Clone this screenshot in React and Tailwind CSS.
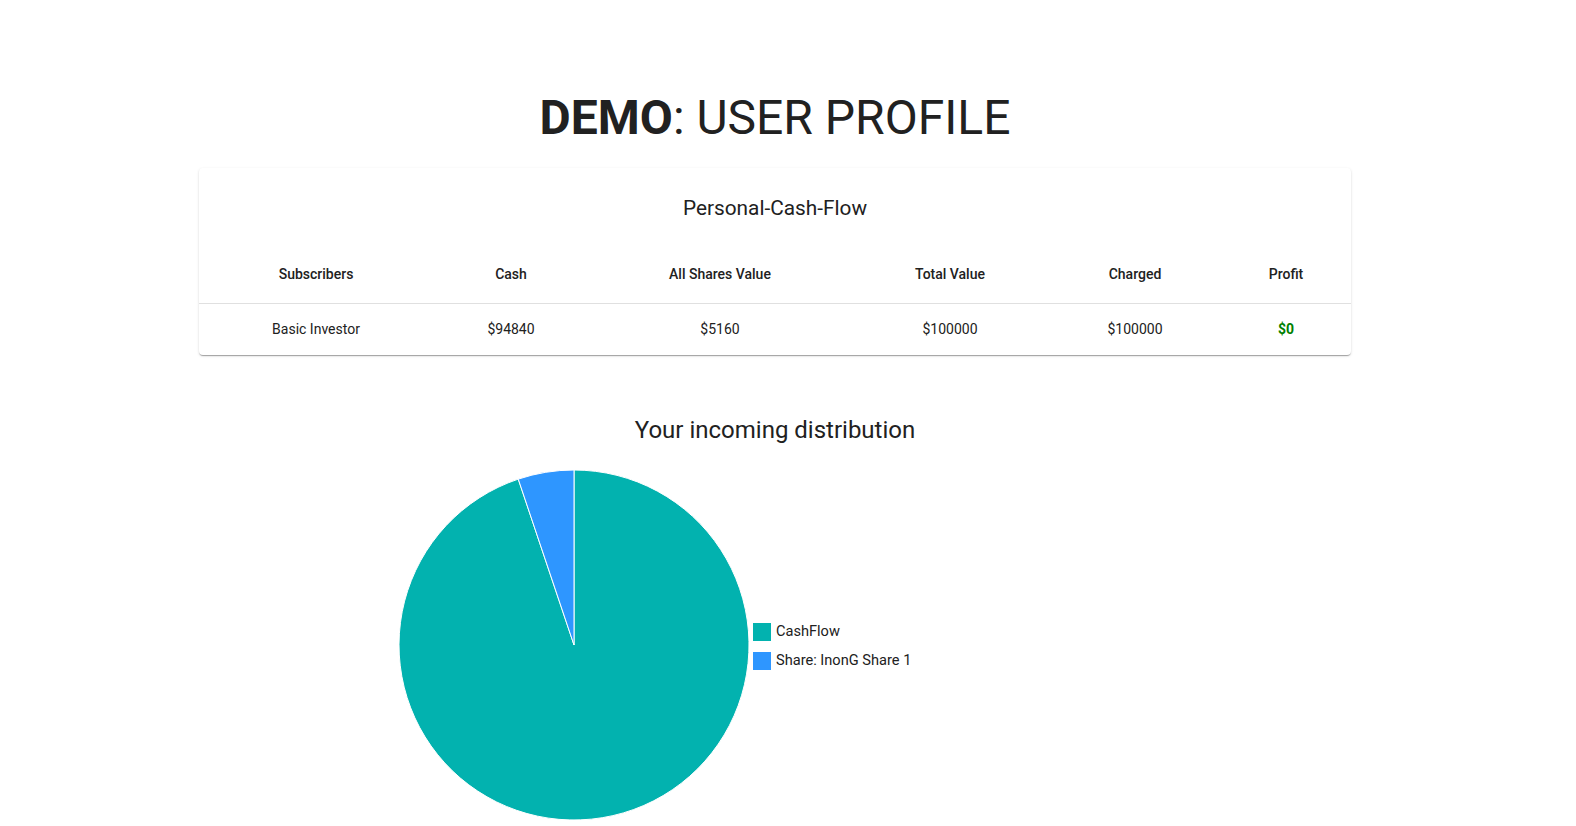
const columns = [
  { label: 'Subscribers', w: 'w-[234px]' },
  { label: 'Cash', w: 'w-[156px]' },
  { label: 'All Shares Value', w: 'w-[262px]' },
  { label: 'Total Value', w: 'w-[198px]' },
  { label: 'Charged', w: 'w-[172px]' },
  { label: 'Profit', w: 'w-[130px]' },
];

const row = ['Basic Investor', '$94840', '$5160', '$100000', '$100000'];

// simple pie slices drawn as svg paths
const slices = [
  { label: 'CashFlow', value: 94840, color: '#02B2AF' },
  { label: 'Share: InonG Share 1', value: 5160, color: '#2E96FF' },
];

function PieChart() {
  const r = 175;
  const cx = 176;
  const cy = 176;
  const total = slices.reduce((s, x) => s + x.value, 0);
  let start = 0;
  const paths = slices.map((s) => {
    const a0 = start;
    const a1 = start + (s.value / total) * Math.PI * 2;
    start = a1;
    const x0 = cx + r * Math.sin(a0);
    const y0 = cy - r * Math.cos(a0);
    const x1 = cx + r * Math.sin(a1);
    const y1 = cy - r * Math.cos(a1);
    const large = a1 - a0 > Math.PI ? 1 : 0;
    return (
      <path
        key={s.label}
        d={`M${cx},${cy} L${x0},${y0} A${r},${r} 0 ${large} 1 ${x1},${y1} Z`}
        fill={s.color}
        stroke="#fff"
        strokeWidth="1"
      />
    );
  });
  return (
    <svg width="352" height="352" viewBox="0 0 352 352">
      {paths}
    </svg>
  );
}

export default function App() {
  return (
    <div className="min-h-screen bg-white text-[#212121]" style={{ fontFamily: 'Roboto, "Liberation Sans", sans-serif' }}>
      <div className="w-[1152px] ml-[199px] pt-[89px]">
        <h1 className="text-center text-[48px] leading-[58px]">
          <span className="font-bold">DEMO</span>: USER PROFILE
        </h1>

        <div className="mt-[21px] bg-white rounded shadow-[0_2px_1px_-1px_rgba(0,0,0,0.2),0_1px_1px_0_rgba(0,0,0,0.14),0_1px_3px_0_rgba(0,0,0,0.12)]">
          <div className="pt-[28px] text-center text-[20.8px] leading-[24px]">Personal-Cash-Flow</div>
          <table className="mt-[26px] w-full table-fixed border-collapse text-[14px]">
            <thead>
              <tr className="border-b border-[#e0e0e0]">
                {columns.map((c) => (
                  <th key={c.label} className={`${c.w} h-[57px] font-medium text-center`}>
                    {c.label}
                  </th>
                ))}
              </tr>
            </thead>
            <tbody>
              <tr>
                {row.map((v, i) => (
                  <td key={i} className="h-[52px] text-center">{v}</td>
                ))}
                <td className="h-[52px] text-center font-bold text-[#008000]">$0</td>
              </tr>
            </tbody>
          </table>
        </div>

        <h2 className="mt-[59px] text-center text-[24px] leading-[32px]">Your incoming distribution</h2>

        <div className="mt-[23px] flex items-center">
          <div className="ml-[199px]">
            <PieChart />
          </div>
          <div className="ml-[3px] mt-[3px] flex flex-col gap-[7px] text-[14.6px]">
            {slices.map((s) => (
              <div key={s.label} className="flex items-center gap-[5px]">
                <span className="w-[18px] h-[18px] inline-block" style={{ backgroundColor: s.color }} />
                <span>{s.label}</span>
              </div>
            ))}
          </div>
        </div>
      </div>
    </div>
  );
}
